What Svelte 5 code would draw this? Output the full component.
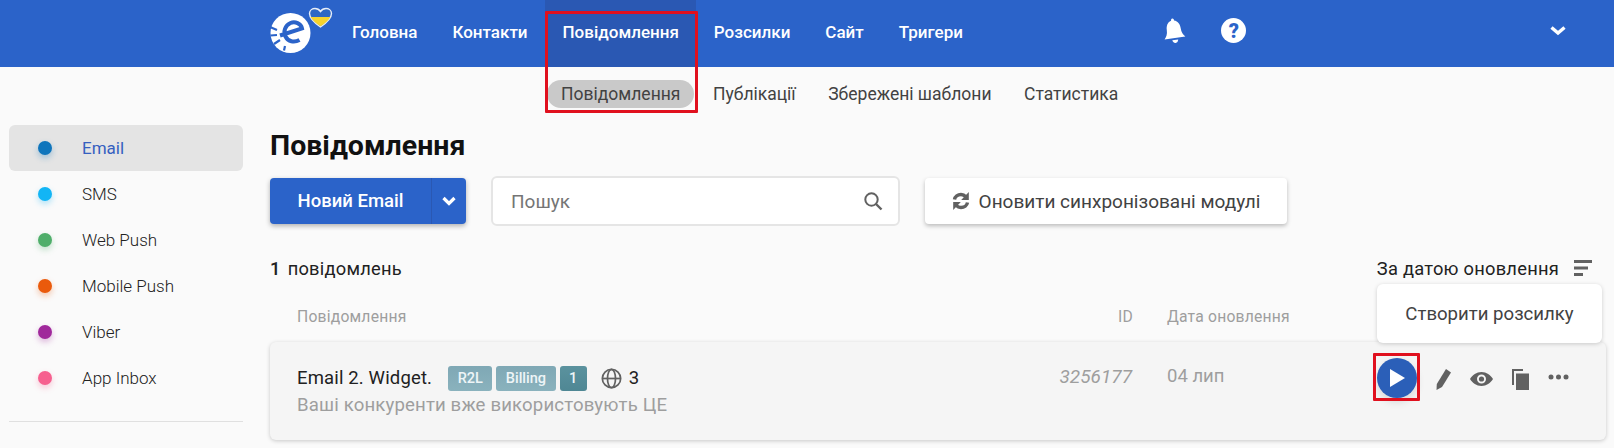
<script>
  const nav = ["Головна", "Контакти", "Повідомлення", "Розсилки", "Сайт", "Тригери"];
  const subnav = ["Повідомлення", "Публікації", "Збережені шаблони", "Статистика"];
  const channels = [
    { name: "Email", color: "#0f75bc" },
    { name: "SMS", color: "#12b5f5" },
    { name: "Web Push", color: "#4fae6a" },
    { name: "Mobile Push", color: "#ea5a0c" },
    { name: "Viber", color: "#a0289b" },
    { name: "App Inbox", color: "#f6608f" },
  ];
</script>

<div class="page">
  <header class="topbar">
    <div class="logo">
      <svg width="69" height="60" viewBox="0 0 69 60">
        <circle cx="25.500" cy="33" r="20" fill="#fff" />
        <path d="M15 35.500 L37 28.500 C36 23.500 30 21 25.500 23 C20 25.500 18 31.500 20.500 36.500 C23 41.500 29 43 34.500 40" fill="none" stroke="#2b63c9" stroke-width="4" />
        <path d="M5 27 L12 30 M5.500 35.500 L12 35 M9 44 L15 40 M19 50.500 L20 46" stroke="#2b63c9" stroke-width="2.200" />
        <path d="M55.500 27 C49 22.500 44.500 18.500 44.500 13.500 C44.500 10 47.500 8.500 50 8.500 C52.500 8.500 54.500 10 55.500 11.500 C56.500 10 58.500 8.500 61 8.500 C63.500 8.500 66.500 10 66.500 13.500 C66.500 18.500 62 22.500 55.500 27 Z" fill="#2c67c4" stroke="#e8eef8" stroke-width="1.400" />
        <path d="M45.500 17 L65.500 17 C63.500 20.500 59.500 24 55.500 26.300 C51.500 24 47.500 20.500 45.500 17 Z" fill="#f6d32d" />
      </svg>
    </div>
    <nav class="mainnav">
      {#each nav as item, i}
        <a href="#top" class:active={i === 2}>{item}</a>
      {/each}
    </nav>
    <div class="tools">
      <svg class="bell" width="26" height="28" viewBox="0 0 26 28">
        <g transform="rotate(-8 13 14)">
          <path d="M13 1.500 C14 1.500 14.500 2.500 14.500 3.500 C18.500 4.500 20 8.500 20 12 C20 16.500 21.500 19 23.500 21 L2.500 21 C4.500 19 6 16.500 6 12 C6 8.500 7.500 4.500 11.500 3.500 C11.500 2.500 12 1.500 13 1.500 Z" fill="#fff" />
          <path d="M10 23 L16 23 C15.500 25 14.500 26 13 26 C11.500 26 10.500 25 10 23 Z" fill="#fff" />
        </g>
      </svg>
      <span class="help">?</span>
    </div>
    <svg class="caret" width="16" height="11" viewBox="0 0 16 11">
      <path d="M1.500 2.500 L8 8 L14.500 2.500" fill="none" stroke="#fff" stroke-width="3.400" />
    </svg>
  </header>

  <div class="subnav">
    {#each subnav as item, i}
      <a href="#top" class:current={i === 0}>{item}</a>
    {/each}
  </div>

  <div class="body">
    <aside class="sidebar">
      {#each channels as c, i}
        <div class="channel" class:selected={i === 0}>
          <span class="dot" style="background:{c.color};box-shadow:0 3px 6px {c.color}55"></span>
          <span>{c.name}</span>
        </div>
      {/each}
      <hr />
    </aside>

    <main class="content">
      <h1>Повідомлення</h1>

      <div class="actions">
        <div class="split">
          <span class="split-main">Новий Email</span>
          <span class="split-arrow">
            <svg width="14" height="10" viewBox="0 0 14 10">
              <path d="M1.500 2 L7 7.500 L12.500 2" fill="none" stroke="#fff" stroke-width="3.200" />
            </svg>
          </span>
        </div>
        <div class="search">
          <span>Пошук</span>
          <svg width="20" height="20" viewBox="0 0 20 20">
            <circle cx="8.500" cy="8.500" r="6.200" fill="none" stroke="#616161" stroke-width="2" />
            <path d="M13 13 L18.500 18.500" stroke="#616161" stroke-width="2.400" />
          </svg>
        </div>
        <div class="sync">
          <svg width="18" height="20" viewBox="0 0 18 20">
            <path d="M2.500 8.500 C3 5.500 5.800 3.500 9 3.500 C11 3.500 12.600 4.300 13.800 5.600" fill="none" stroke="#616161" stroke-width="3.400" />
            <path d="M16.800 1 V9 H9.200 Z" fill="#616161" />
            <path d="M15.500 11.500 C15 14.500 12.200 16.500 9 16.500 C7 16.500 5.400 15.700 4.200 14.400" fill="none" stroke="#616161" stroke-width="3.400" />
            <path d="M1.200 19 V11 H8.800 Z" fill="#616161" />
          </svg>
          <span>Оновити синхронізовані модулі</span>
        </div>
      </div>

      <div class="summary">
        <span class="total"><b>1</b><span>повідомлень</span></span>
        <span class="sort">
          За датою оновлення
          <svg width="18" height="16" viewBox="0 0 18 16">
            <path d="M0 0 H18 V3 H0 Z M0 6.500 H14 V9.500 H0 Z M0 13 H9 V16 H0 Z" fill="#616161" />
          </svg>
        </span>
      </div>

      <div class="columns">
        <span class="col-name">Повідомлення</span>
        <span class="col-id">ID</span>
        <span class="col-date">Дата оновлення</span>
      </div>

      <div class="card">
        <div class="col-name">
          <div class="line">
            <span class="title">Email 2. Widget.</span>
            <span class="tag">R2L</span>
            <span class="tag">Billing</span>
            <span class="tag dark">1</span>
            <svg class="globe" width="21" height="21" viewBox="0 0 22 22">
              <g fill="none" stroke="#616161" stroke-width="1.800">
                <circle cx="11" cy="11" r="9.600" />
                <ellipse cx="11" cy="11" rx="4.200" ry="9.600" />
                <path d="M1.500 11 H20.500" />
              </g>
            </svg>
            <span class="count">3</span>
          </div>
          <div class="desc">Ваші конкуренти вже використовують ЦЕ</div>
        </div>
        <i class="col-id value">3256177</i>
        <span class="col-date value">04 лип</span>
        <div class="row-actions">
          <span class="play">
            <svg width="16" height="18" viewBox="0 0 16 18"><path d="M1 0 L16 9 L1 18 Z" fill="#fff" /></svg>
          </span>
          <svg class="pencil" width="15" height="21" viewBox="0 0 15 21">
            <path d="M10 0 L15 3.500 L6 18 L.5 21 L.8 15 Z" fill="#616161" />
          </svg>
          <svg class="eye" width="23" height="14" viewBox="0 0 23 14">
            <path fill-rule="evenodd" d="M11.500 0 C16.500 0 20.500 3 23 7 C20.500 11 16.500 14 11.500 14 C6.500 14 2.500 11 0 7 C2.500 3 6.500 0 11.500 0 Z M11.500 2.500 A4.500 4.500 0 1 0 11.500 11.500 A4.500 4.500 0 1 0 11.500 2.500 Z" fill="#616161" />
            <circle cx="11.500" cy="7" r="2.600" fill="#616161" />
          </svg>
          <svg class="copy" width="17" height="21" viewBox="0 0 17 21">
            <path d="M0 0 H11 V2 H2 V16 H0 Z M4 4.500 H17 V21 H4 Z" fill="#616161" />
          </svg>
          <svg class="more" width="21" height="6" viewBox="0 0 21 6">
            <circle cx="3" cy="3" r="2.500" fill="#616161" /><circle cx="10.500" cy="3" r="2.500" fill="#616161" /><circle cx="18" cy="3" r="2.500" fill="#616161" />
          </svg>
        </div>
      </div>

      <div class="popover">Створити розсилку</div>
    </main>
  </div>

  <div class="mark mark-nav"></div>
  <div class="mark mark-play"></div>
</div>

<style>
  :global(body) {
    margin: 0;
    background: #fafafa;
  }

  .page {
    position: relative;
    width: 1614px;
    height: 448px;
    overflow: hidden;
    font-family: Roboto, "Liberation Sans", sans-serif;
    color: #212121;
    background: #fafafa;
  }

  a {
    color: inherit;
    text-decoration: none;
  }

  .topbar {
    display: flex;
    align-items: stretch;
    height: 67px;
    padding-left: 265px;
    background: #2b63c9;
    color: #fff;
  }

  .logo {
    width: 69.500px;
  }

  .mainnav {
    display: flex;
  }

  .mainnav a {
    display: flex;
    align-items: center;
    padding: 0 17.500px;
    padding-bottom: 3px;
    font-size: 17px;
    font-weight: 500;
  }

  .mainnav a.active {
    background: #2a58b3;
  }

  .tools {
    display: flex;
    align-items: center;
    gap: 34px;
    margin-left: 181px;
    padding-bottom: 6px;
  }

  .help {
    display: flex;
    align-items: center;
    justify-content: center;
    width: 25px;
    height: 25px;
    border-radius: 50%;
    background: #fff;
    color: #2b63c9;
    font-size: 20px;
    font-weight: 900;
  }

  .caret {
    align-self: center;
    margin-left: auto;
    margin-right: 48px;
    margin-bottom: 6px;
  }

  .subnav {
    display: flex;
    align-items: center;
    height: 53px;
    padding-left: 547px;
    font-size: 17.500px;
    color: #424242;
  }

  .subnav a {
    padding: 4px 14px;
    margin-right: 4.500px;
    border-radius: 15px;
  }

  .subnav a.current {
    background: #c9c9c9;
  }

  .body {
    display: flex;
    padding-top: 5px;
  }

  .sidebar {
    width: 234px;
    margin-left: 9px;
    margin-right: 27px;
    flex: none;
  }

  .channel {
    display: flex;
    align-items: center;
    gap: 30px;
    height: 46px;
    padding-left: 29px;
    border-radius: 6px;
    font-size: 17px;
    font-weight: 300;
  }

  .channel.selected {
    background: #e4e4e4;
    color: #3560c0;
    font-weight: 400;
  }

  .dot {
    width: 14px;
    height: 14px;
    border-radius: 50%;
  }

  hr {
    height: 1px;
    margin: 20px 0 0;
    border: 0;
    background: #e0e0e0;
  }

  .content {
    position: relative;
    width: 1336px;
  }

  h1 {
    margin: 0;
    font-size: 28.500px;
    line-height: 41px;
    font-weight: 700;
    color: #111;
  }

  .actions {
    display: flex;
    align-items: center;
    margin-top: 10px;
    height: 50px;
  }

  .split {
    display: flex;
    width: 196px;
    height: 46px;
    margin-right: 25px;
    border-radius: 4px;
    background: #2b63c9;
    color: #fff;
    font-size: 18.500px;
    font-weight: 500;
    box-shadow: 0 2px 5px rgba(0, 0, 0, 0.3);
  }

  .split-main {
    display: flex;
    align-items: center;
    justify-content: center;
    width: 161px;
    border-right: 1px solid #2a58b3;
  }

  .split-arrow {
    display: flex;
    flex: 1;
    align-items: center;
    justify-content: center;
  }

  .search {
    display: flex;
    align-items: center;
    justify-content: space-between;
    box-sizing: border-box;
    width: 409px;
    height: 50px;
    margin-right: 25px;
    padding: 0 15px 0 18px;
    border: 2px solid #e5e5e5;
    border-radius: 6px;
    background: #fff;
    color: #757575;
    font-size: 19px;
  }

  .sync {
    display: flex;
    align-items: center;
    justify-content: center;
    gap: 9px;
    width: 362px;
    height: 46px;
    border-radius: 4px;
    background: #fff;
    color: #424242;
    font-size: 19px;
    box-shadow: 0 2px 4px rgba(0, 0, 0, 0.25);
  }

  .summary {
    display: flex;
    justify-content: space-between;
    align-items: center;
    margin-top: 30px;
    height: 24px;
    padding-right: 14px;
    font-size: 18.300px;
    letter-spacing: 0.25px;
  }

  .total {
    display: flex;
    gap: 7px;
  }

  .summary b {
    font-weight: 500;
  }

  .sort {
    display: flex;
    align-items: center;
    gap: 15px;
  }

  .columns {
    display: flex;
    align-items: center;
    height: 24px;
    margin-top: 24px;
    padding-left: 27px;
    font-size: 15.700px;
    letter-spacing: 0.2px;
    color: #9e9e9e;
  }

  .col-name {
    width: 766px;
    flex: none;
  }

  .col-id {
    width: 70px;
    flex: none;
    text-align: right;
  }

  .col-date {
    flex: none;
    margin-left: 34px;
  }

  .card {
    display: flex;
    align-items: center;
    box-sizing: border-box;
    height: 98px;
    margin-top: 14px;
    padding-left: 27px;
    border-radius: 6px;
    background: #f5f5f5;
    box-shadow: 0 1px 4px rgba(0, 0, 0, 0.2);
  }

  .line {
    display: flex;
    align-items: center;
    height: 28px;
    font-size: 18.500px;
    letter-spacing: 0.15px;
  }

  .title {
    margin-right: 16px;
  }

  .tag {
    display: flex;
    align-items: center;
    height: 25px;
    margin-right: 4px;
    padding: 0 9.500px;
    border-radius: 3px;
    background: linear-gradient(#7fa8b5, #8ab2bd);
    color: #eef5f7;
    font-size: 14.500px;
    font-weight: 500;
    letter-spacing: 0;
  }

  .tag.dark {
    background: linear-gradient(#5b929e, #4f8794);
  }

  .globe {
    margin-left: 10px;
    margin-right: 7px;
  }

  .desc {
    font-size: 18.600px;
    letter-spacing: 0.15px;
    line-height: 26px;
    color: #9e9e9e;
  }

  .value {
    align-self: flex-start;
    margin-top: 23px;
    color: #9e9e9e;
    font-size: 18.500px;
  }

  i.value {
    box-sizing: border-box;
    width: 80px;
    margin-left: -10px;
    padding-right: 1px;
    font-size: 19px;
  }

  .row-actions {
    display: flex;
    align-items: center;
    align-self: flex-start;
    gap: 19px;
    margin-top: 16px;
    margin-left: auto;
    margin-right: 37px;
    height: 40px;
  }

  .play {
    display: flex;
    align-items: center;
    justify-content: center;
    width: 40px;
    height: 40px;
    border-radius: 50%;
    background: #2b5fb8;
    box-shadow: 0 4px 8px rgba(0, 0, 0, 0.12);
  }

  .pencil {
    margin-top: 3px;
  }

  .eye {
    margin-top: 2px;
  }

  .copy {
    margin-top: 3px;
  }

  .more {
    margin-bottom: 2px;
  }

  .popover {
    position: absolute;
    top: 159px;
    right: 4px;
    display: flex;
    align-items: center;
    justify-content: center;
    width: 225px;
    height: 59px;
    border-radius: 6px;
    background: #fff;
    color: #424242;
    font-size: 18.600px;
    box-shadow: 0 1px 4px rgba(0, 0, 0, 0.18);
  }

  .mark {
    position: absolute;
    box-sizing: border-box;
    border: 3px solid #e0101e;
    border-radius: 1px;
  }

  .mark-nav {
    left: 545px;
    top: 11px;
    width: 153px;
    height: 102px;
  }

  .mark-play {
    left: 1373px;
    top: 353px;
    width: 47px;
    height: 48px;
  }
</style>
